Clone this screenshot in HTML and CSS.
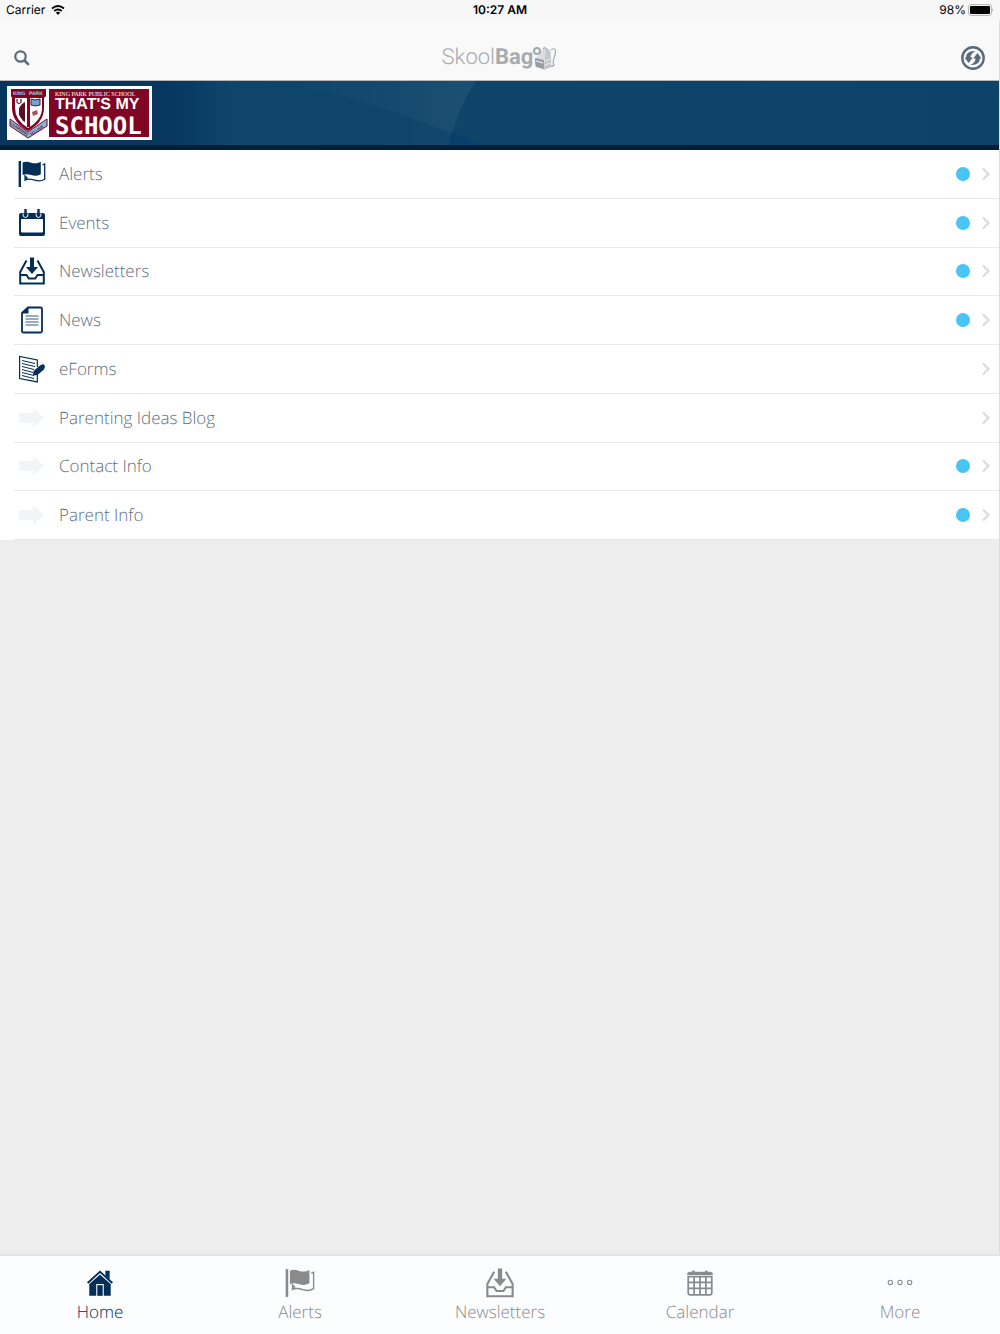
FILE: index.html
```
<!DOCTYPE html>
<html lang="en">
<head>
	<meta charset="UTF-8">
	<meta name="viewport" content="width=device-width, initial-scale=1">
	<title>SkoolBag</title>
	<link rel="stylesheet" href="styles.css">
</head>
<body>
	<!-- shared icons -->
	<svg class="sprite" width="0" height="0" aria-hidden="true">
		<symbol id="flag" viewBox="0 0 28 28">
			<path d="M.6 1H3v26H.6z"/>
			<path d="M4.600 2.500c3-1.300 5.500-.8 8.500.2 3.500 1 6 1 9.700-.9v12.400c-3.500 1.800-6 2-9.500.9-3.300-1-5.700-1.500-8.700 0z"/>
			<path d="M24.500 4.800l2.200-.8v15.300c-3.500 2.200-7 1.900-10 .9-3.200-1.100-5.700-1.800-9.200-.4l1.500-2-2-2v4" fill="none" stroke="currentColor" stroke-width="1.300"/>
		</symbol>
		<symbol id="inbox" viewBox="0 0 28 28">
			<path d="M8.500 3.500L2.200 15v11.400h23.600V15L19.500 3.500M2.200 18h6.300l2.300 3.500h6.400l2.300-3.500h6.300" fill="none" stroke="currentColor" stroke-width="2"/>
			<path d="M12 .5h4V10h4l-6 7-6-7h4z"/>
		</symbol>
		<symbol id="arrow" viewBox="0 0 28 28">
			<path d="M1 9h14V4l11 10-11 10v-5H1z"/>
		</symbol>
		<symbol id="chevron" viewBox="0 0 8 14">
			<path d="M1 1.500L6.500 7 1 12.500" fill="none" stroke="currentColor" stroke-width="2.200"/>
		</symbol>
	</svg>

	<div class="status">
		<div class="carrier">Carrier
			<svg width="14" height="10" viewBox="0 0 14 10">
				<path d="M1 3.600q6-5 12 0M3.200 6q3.800-3 7.600 0" fill="none" stroke="#000" stroke-width="1.900"/>
				<path d="M4.800 7.600q2.200-1.600 4.400 0L7 10z"/>
			</svg>
		</div>
		<div class="clock">10:27 AM</div>
		<div class="battery">98%
			<svg width="26" height="12" viewBox="0 0 26 12">
				<rect x=".7" y=".7" width="22.600" height="10.600" rx="2" fill="#fff" stroke="#aaa"/>
				<rect x="2" y="2" width="20" height="8" rx="1"/>
				<path d="M24.300 4v4q1.400-2 0-4" fill="#888"/>
			</svg>
		</div>
	</div>

	<div class="page">
		<header class="topbar">
			<button class="iconBtn" type="button" aria-label="Search">
				<svg width="16" height="16" viewBox="0 0 16 16" fill="none" stroke="currentColor">
					<circle cx="6.500" cy="6.500" r="5.200" stroke-width="2.200"/>
					<path d="M10.500 10.500l4.300 4.300" stroke-width="2.600"/>
				</svg>
			</button>
			<div class="brand">
				<span>Skool<b>Bag</b></span>
				<svg width="24" height="24" viewBox="0 0 24 24">
					<path d="M8 5Q12-1 17 4q2 3 1 17l-8 3-7-4V12z" fill="#dcdde0"/>
					<path d="M13 3l4 2 1 16-7 3z" fill="#c4c6ca"/>
					<path d="M2 12l9 2v9l-8-2q-1-1-1-9z" fill="#9b9ea5"/>
					<path d="M3 15l7 2M12 15l5-2M12 19l5-2" fill="none" stroke="#f3f3f4"/>
					<path d="M10 3q2-3 4 1M18 4q6-4 4 5-3 8-1 10-2 2-3 1" fill="none" stroke="#a5a8ae" stroke-width="1.200"/>
					<circle cx="4" cy="5" r="3" fill="#f9f9f9" stroke="#a5a8ae" stroke-width="2"/>
				</svg>
			</div>
			<button class="iconBtn" type="button" aria-label="Refresh">
				<svg width="24" height="24" viewBox="0 0 24 24">
					<circle cx="12" cy="12" r="10.700" fill="none" stroke="currentColor" stroke-width="2.400"/>
					<path id="turn" d="M14.500 5Q5 4.500 5.200 11.500H3.500L7.500 17l4.300-5.500H9.500Q9.200 8 14.500 5z" fill="currentColor"/>
					<use href="#turn" transform="rotate(180 12 12)"/>
				</svg>
			</button>
		</header>

		<div class="banner">
			<svg class="rays" viewBox="0 0 1000 64" preserveAspectRatio="none" aria-hidden="true">
				<defs>
					<linearGradient id="glow">
						<stop offset="0" stop-color="#fff" stop-opacity="0"/>
						<stop offset="1" stop-color="#fff" stop-opacity=".04"/>
					</linearGradient>
				</defs>
				<path d="M280 0H476Q460 26 452 52Q360 16 280 0z" fill="url(#glow)"/>
				<path d="M380 0H476Q459 27 449 64H380z" fill="url(#glow)" opacity=".5"/>
				<path d="M452 52q16 4 30 12h-33z" fill="#003b6b" opacity=".5"/>
			</svg>
			<svg class="school" width="145" height="54" viewBox="0 0 145 54">
				<path fill="#fff" d="M0 0h145v54H0z"/>
				<path fill="#800524" d="M42 3h100v48H42z"/>
				<g fill="#fff">
					<text class="schoolName" x="48" y="10">KING PARK PUBLIC SCHOOL</text>
					<text class="schoolMy" x="48" y="23">THAT'S MY</text>
					<text class="schoolBig" x="48" y="48">SCHOOL</text>
				</g>
				<!-- crest -->
				<path d="M4 3h35v7l-2 2v10q0 14-16 23Q5 36 5 22V12L4 10z" fill="#800524"/>
				<path d="M8 12h27v10q0 12-14 20Q8 34 8 22z" fill="#fff"/>
				<path d="M20 10h3v31h-3z" fill="#800524"/>
				<path d="M10 13v3q2 3 4 0v-3" fill="none" stroke="#5a1020" stroke-width="1.200"/>
				<path d="M12 22l3-4 3-2v20l-2-1-4-6z" fill="#5a1020"/>
				<path d="M24 13l4 1 5-1v6l-5 1-4-1z" fill="#70a6d5" stroke="#5a1020"/>
				<path d="M25 26l5-2 1 4-5 2z" fill="#a05666"/>
				<path d="M3 33l18 13 19-13v7L21 52 3 40z" fill="#82b9e0" stroke="#800524"/>
				<g class="crestText">
					<text class="crestTop" x="6" y="9" fill="#9cd0f2">KING</text>
					<text class="crestTop" x="22" y="9" fill="#9cd0f2">PARK</text>
					<text transform="translate(3 38) rotate(35)" fill="#700b25">LEARNING</text>
					<text transform="translate(24 50) rotate(-34)" fill="#700b25">TO LIVE</text>
				</g>
			</svg>
		</div>

		<ul class="menu">
			<li><a href="#">
				<svg class="icon"><use href="#flag"/></svg>
				<span class="label">Alerts</span><i class="dot"></i><svg class="chevron"><use href="#chevron"/></svg>
			</a></li>
			<li><a href="#">
				<svg class="icon" viewBox="0 0 28 28">
					<path fill-rule="evenodd" d="M3 4h22q2 0 2 2v19q0 2-2 2H3q-2 0-2-2V6q0-2 2-2zm0 7v11q0 1.500 1.500 1.500h19Q25 23.500 25 22V11q0-1-1-1H4q-1 0-1 1z"/>
					<path d="M5 4.500q-.5 4 2.500 4t2.500-4M18 4.500q-.5 4 2.500 4t2.500-4" fill="none" stroke="#fff"/>
					<path d="M6.300 0h2.400v7H6.300zM19.300 0h2.400v7h-2.400z"/>
				</svg>
				<span class="label">Events</span><i class="dot"></i><svg class="chevron"><use href="#chevron"/></svg>
			</a></li>
			<li><a href="#">
				<svg class="icon"><use href="#inbox"/></svg>
				<span class="label">Newsletters</span><i class="dot"></i><svg class="chevron"><use href="#chevron"/></svg>
			</a></li>
			<li><a href="#">
				<svg class="icon" viewBox="0 0 28 28">
					<path d="M10 1.500h12.500q1.500 0 1.500 1.500v22q0 1.500-1.500 1.500h-17Q4 26.500 4 25V7z" fill="none" stroke="currentColor" stroke-width="1.800"/>
					<path d="M3.500 7.500L10.500 1v6.500z"/>
					<path d="M7.500 10h13M7.500 13h13M7.500 16h13M7.500 19h13" stroke="currentColor" stroke-width=".8"/>
				</svg>
				<span class="label">News</span><i class="dot"></i><svg class="chevron"><use href="#chevron"/></svg>
			</a></li>
			<li><a href="#">
				<svg class="icon" viewBox="0 0 28 28">
					<path d="M19.300 12V5L1.600 1.500v22l17.700 3.400V18" fill="none" stroke="currentColor" stroke-width="1.200"/>
					<path d="M4 5.500L17 8.500M4 8.500l13 3M4 11.500l12 3M4 14.500l11 3M4 17.500l12 3M4 20.500l12 3" stroke="currentColor" stroke-width="1"/>
					<path d="M15.500 16l7-6 4 4-7 6-4.500.5z"/>
					<path d="M22.500 10.500L25 9q2 1 2 3l-1 2z"/>
				</svg>
				<span class="label">eForms</span><svg class="chevron"><use href="#chevron"/></svg>
			</a></li>
			<li><a href="#">
				<svg class="icon pale"><use href="#arrow"/></svg>
				<span class="label">Parenting Ideas Blog</span><svg class="chevron"><use href="#chevron"/></svg>
			</a></li>
			<li><a href="#">
				<svg class="icon pale"><use href="#arrow"/></svg>
				<span class="label">Contact Info</span><i class="dot"></i><svg class="chevron"><use href="#chevron"/></svg>
			</a></li>
			<li><a href="#">
				<svg class="icon pale"><use href="#arrow"/></svg>
				<span class="label">Parent Info</span><i class="dot"></i><svg class="chevron"><use href="#chevron"/></svg>
			</a></li>
		</ul>
	</div>

	<nav class="tabs">
		<a class="tab active" href="#">
			<svg viewBox="0 0 28 28">
				<path fill-rule="evenodd" d="M14 6l10 8.500V26H4V14.500zM10.500 15v11h7V15z"/>
				<path d="M11.500 16h5v10h-5z"/>
				<path d="M2.500 14L14 3.500 25.500 14" fill="none" stroke="currentColor" stroke-width="1.800"/>
				<path d="M19 2.500h4V11l-4-4z"/>
				<path d="M4 14.700L14 5.500l10 9.200" fill="none" stroke="#fcfdff" stroke-width=".8"/>
			</svg>
			Home
		</a>
		<a class="tab" href="#"><svg><use href="#flag"/></svg>Alerts</a>
		<a class="tab" href="#"><svg><use href="#inbox"/></svg>Newsletters</a>
		<a class="tab" href="#">
			<svg viewBox="0 0 28 28">
				<path d="M2 6.500q0-3 3-3h1.500q1-3 3 0h9q1-3 3 0H23q3 0 3 3z"/>
				<path d="M3 8h22v15q0 2-2 2H5q-2 0-2-2zM3 13.500h22M3 19h22M8.500 8v17M14 8v17M19.500 8v17" fill="none" stroke="currentColor" stroke-width="1.600"/>
			</svg>
			Calendar
		</a>
		<a class="tab" href="#">
			<svg class="more" viewBox="0 0 28 28">
				<circle cx="5" cy="13.500" r="2"/><circle cx="14" cy="13.500" r="2"/><circle cx="23" cy="13.500" r="2"/>
			</svg>
			More
		</a>
	</nav>
</body>
</html>
```
FILE: styles.css
```
*{
	box-sizing: border-box;
}
body{
	margin: 0;
	min-height: 100vh;
	display: flex;
	flex-direction: column;
	background: #ededed;
	font-family: "Open Sans", sans-serif;
	font-weight: 300;
	text-rendering: geometricPrecision;
}
a{
	color: inherit;
	text-decoration: none;
}
svg{
	display: block;
	flex: none;
}
.sprite{
	position: absolute;
}
.status{
	height: 20px;
	padding: 0 6px;
	display: grid;
	grid-template-columns: 1fr auto 1fr;
	align-items: center;
	background: #f7f7f7;
	color: #000;
	font: 400 12px/20px Inter, sans-serif;
}
.carrier,
.battery{
	display: flex;
	align-items: center;
	gap: 6px;
}
.battery{
	justify-content: flex-end;
	gap: 2px;
}
.clock{
	font-weight: 600;
}
.page{
	flex: 1;
	border-right: 1px solid #dcdcdc;
}
.topbar{
	height: 61px;
	padding: 16px 14px 0;
	display: grid;
	grid-template-columns: 1fr auto 1fr;
	align-items: center;
	background: #f9f9f9;
	border-bottom: 1px solid #b5b9bf;
}
.iconBtn{
	padding: 0;
	border: 0;
	background: none;
	color: #586a7b;
	justify-self: start;
}
.iconBtn:last-child{
	justify-self: end;
}
.brand{
	display: flex;
	align-items: center;
	color: #a8abb0;
	font: 300 22px/24px Roboto, sans-serif;
}
.brand b{
	font-weight: 700;
}
.banner{
	position: relative;
	height: 69px;
	padding: 5px 7px;
	background: linear-gradient(90deg, #07375f 0, #07375f 170px, #10456a 230px, #0e4369 100%);
	border-bottom: 5px solid #011f38;
}
.rays{
	position: absolute;
	top: 0;
	left: 0;
	width: 100%;
	height: 64px;
}
.school{
	position: relative;
}
.schoolName{
	font: 400 6px "Liberation Serif", serif;
}
.schoolMy{
	font: 700 16px "Liberation Sans", sans-serif;
}
.schoolBig{
	font: 700 24px "DejaVu Sans Mono", monospace;
}
.crestText{
	font: 700 4px "Liberation Sans", sans-serif;
}
.crestTop{
	font-size: 5px;
}
.menu{
	margin: 0;
	padding: 0;
	min-height: 390px;
	display: grid;
	grid-auto-rows: 1fr;
	list-style: none;
	background: #fff;
	color: #5f6f7e;
	font-size: 17px;
	line-height: 24px;
}
.menu li{
	margin-left: 14px;
	border-bottom: 1px solid #e6e8eb;
}
.menu a{
	height: 100%;
	padding: 0 9px 0 4px;
	display: flex;
	align-items: center;
}
.icon{
	width: 28px;
	height: 28px;
	margin-right: 13px;
	color: #032f57;
	fill: currentColor;
}
.pale{
	color: #f3f4f6;
}
.label{
	flex: 1;
}
.dot{
	width: 14px;
	height: 14px;
	margin-right: 12px;
	border-radius: 50%;
	background: #48c4f5;
}
.chevron{
	width: 8px;
	height: 14px;
	color: #d9dbde;
}
.tabs{
	display: grid;
	grid-template-columns: repeat(5, 1fr);
	padding: 12px 0 10px;
	background: #fcfdff;
	border-top: 2px solid #e4e4e4;
	color: #8a8a8a;
	font-size: 17px;
	line-height: 24px;
}
.tab{
	display: flex;
	flex-direction: column;
	align-items: center;
	gap: 2px;
}
.tab svg{
	width: 30px;
	height: 30px;
	fill: currentColor;
}
.tab .more{
	fill: none;
	stroke: currentColor;
}
.active{
	color: #032f57;
}
```
